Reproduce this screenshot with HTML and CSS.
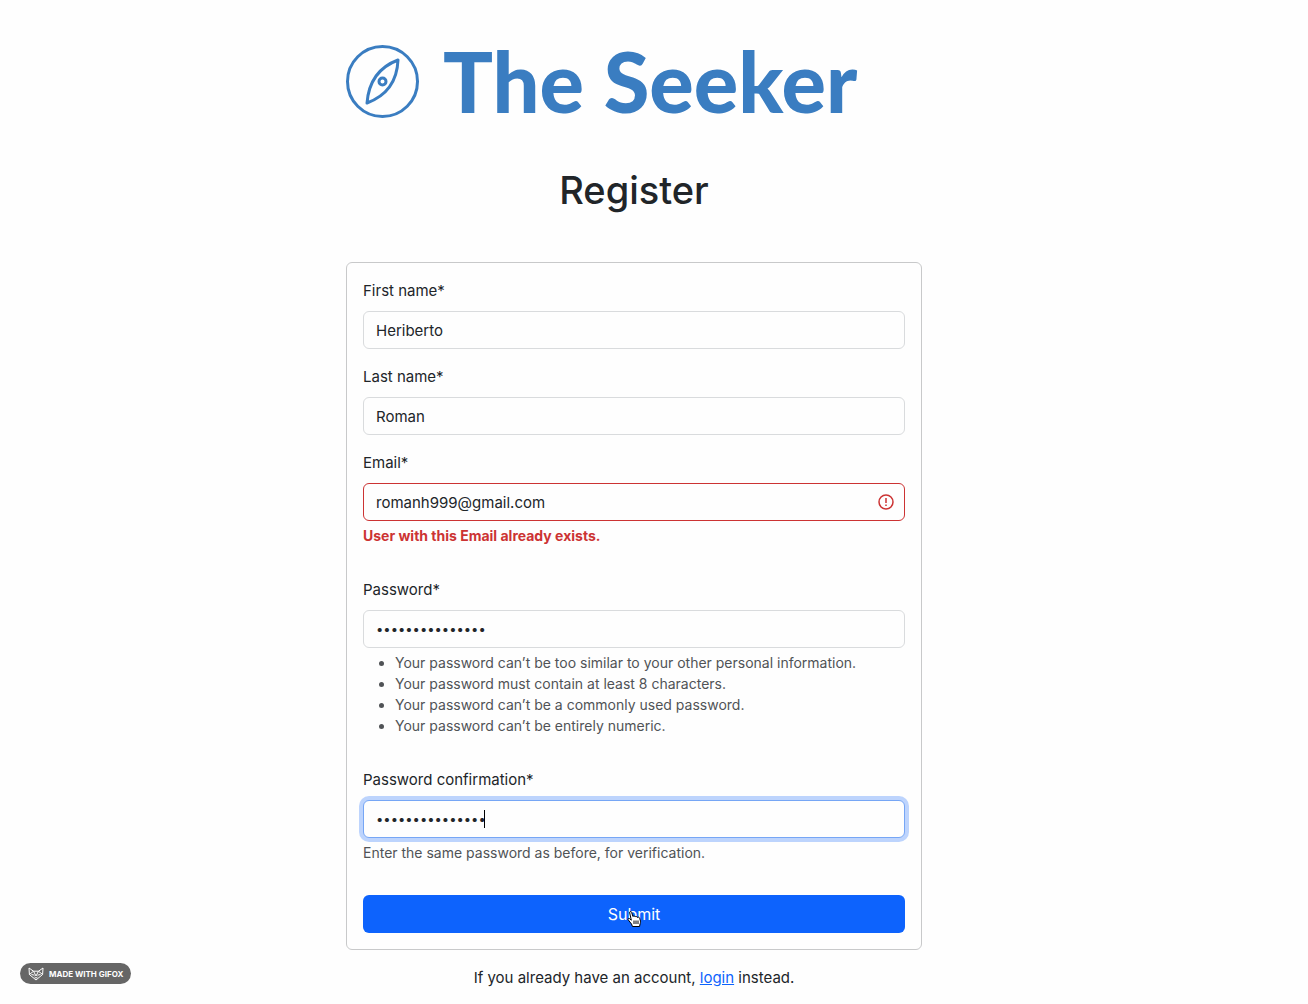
FILE: index.html
```html
<!DOCTYPE html>
<html lang="en">
<head>
<meta charset="utf-8">
<meta name="viewport" content="width=device-width, initial-scale=1">
<title>Register - The Seeker</title>
<link rel="stylesheet" href="styles.css">
</head>
<body>
<main class="page">
  <div class="brand">
    <svg class="brand-mark" viewBox="0 0 73 73" aria-hidden="true">
      <circle cx="36.500" cy="36.500" r="35"/>
      <path d="M52 15C36 21 23 33 21 58C37 52 51 40 52 15Z"/>
      <circle cx="36.500" cy="36.500" r="3.500"/>
    </svg>
    <span class="brand-name">The Seeker</span>
  </div>

  <h1 class="title">Register</h1>

  <form class="card">
    <div class="field">
      <label for="first-name">First name*</label>
      <input class="control" id="first-name" type="text" value="Heriberto">
    </div>
    <div class="field">
      <label for="last-name">Last name*</label>
      <input class="control" id="last-name" type="text" value="Roman">
    </div>
    <div class="field field-with-note">
      <label for="email">Email*</label>
      <div class="control-wrap">
        <input class="control invalid" id="email" type="email" value="romanh999@gmail.com" aria-describedby="email-error">
        <svg class="error-icon" viewBox="0 0 32 32" aria-hidden="true">
          <circle cx="16" cy="16" r="14"/>
          <path d="M16 8v10M16 21v3"/>
        </svg>
      </div>
      <p class="error" id="email-error">User with this Email already exists.</p>
    </div>
    <div class="field field-with-note">
      <label for="password">Password*</label>
      <input class="control" id="password" type="password" value="seekerpassword1" aria-describedby="password-help">
      <ul class="note" id="password-help">
        <li>Your password can’t be too similar to your other personal information.</li>
        <li>Your password must contain at least 8 characters.</li>
        <li>Your password can’t be a commonly used password.</li>
        <li>Your password can’t be entirely numeric.</li>
      </ul>
    </div>
    <div class="field field-with-note">
      <label for="password-confirm">Password confirmation*</label>
      <div class="control-wrap">
        <input class="control focused" id="password-confirm" type="password" value="seekerpassword1" aria-describedby="confirm-help">
        <span class="caret"></span>
      </div>
      <p class="note" id="confirm-help">Enter the same password as before, for verification.</p>
    </div>
    <button class="submit" type="submit">Submit
      <svg class="pointer" viewBox="0 0 16 18" aria-hidden="true">
        <path d="M5.500 16.500L4.500 14L1.200 9.800C.5 8.700 1.800 7.800 2.700 8.700L4.300 10.200L2.700 3C2.300 1.300 4.100.8 4.600 2.300L5.900 6.500C6.500 5.700 7.700 5.800 8.100 6.800C8.800 6.200 9.900 6.400 10.300 7.400C11.200 6.800 12.400 7.200 12.700 8.300L13.500 11.200C13.800 13 12.700 14.300 12.600 16.500Z"/>
        <path d="M7 10.500v3.500M9 10.500v3.500M11 10.500v3.500"/>
      </svg>
    </button>
  </form>

  <p class="alternate">If you already have an account, <a href="#login">login</a> instead.</p>
</main>

<div class="badge">
  <svg class="fox" viewBox="0 0 16 14" aria-hidden="true">
    <path d="M1 1L5.500 4.200H10.500L15 1L14.600 7.500L8 13L1.400 7.500Z"/>
    <path d="M1.400 7.500L5.500 4.200L8 9L10.500 4.200L14.600 7.500M3.500 7.500L6.500 8.200M12.500 7.500L9.500 8.200M6.500 10L8 11.200L9.500 10"/>
  </svg>
  <span>MADE WITH GIFOX</span>
</div>
</body>
</html>
```

FILE: styles.css
```css
* {
  box-sizing: border-box;
}

body {
  margin: 0;
  background: #fefefe;
  color: #212529;
  font: 400 15px/24px Inter, "Liberation Sans", sans-serif;
}

.page {
  display: flex;
  flex-direction: column;
  align-items: center;
  padding: 45px 40px 14px 0;
}

.brand,
.card {
  width: 100%;
  max-width: 576px;
}

.brand {
  display: flex;
  align-items: center;
  gap: 24px;
  color: #3a7dc1;
}

.brand-mark {
  width: 73px;
  height: 73px;
  flex: none;
  fill: none;
  stroke: currentColor;
  stroke-width: 3;
  stroke-linejoin: round;
}

.brand-name {
  font: 900 83px/73px Lato, sans-serif;
  white-space: nowrap;
}

.title {
  margin: 48px 0;
  font-size: 38px;
  line-height: 48px;
  font-weight: 500;
}

.card {
  padding: 16px;
  border: 1px solid #c8c9ca;
  border-radius: 6px;
}

.field {
  display: flex;
  flex-direction: column;
  margin-bottom: 16px;
}

.field-with-note {
  margin-bottom: 32px;
}

.field label {
  margin-bottom: 8px;
}

.control {
  display: block;
  width: 100%;
  height: 38px;
  padding: 6px 12px;
  border: 1px solid #d9dbdd;
  border-radius: 6px;
  background: #fefefe;
  color: inherit;
  font: inherit;
}

.control[type="password"] {
  font-size: 13px;
}

.control-wrap {
  position: relative;
}

.invalid {
  padding-right: 40px;
  border-color: #cc3333;
}

.focused {
  border-color: #76a6f5;
  box-shadow: 0 0 0 4px #bdd4fd;
}

.error-icon {
  position: absolute;
  top: 11px;
  right: 11px;
  width: 16px;
  height: 16px;
  fill: none;
  stroke: #cc3333;
  stroke-width: 3;
}

.caret {
  position: absolute;
  top: 10px;
  left: 121px;
  width: 1px;
  height: 18px;
  background: #000;
}

.note,
.error {
  margin: 4px 0 0;
  font-size: 14px;
  line-height: 21px;
}

.note {
  color: #505356;
}

ul.note {
  padding-left: 32px;
}

.error {
  color: #cc3333;
  font-weight: 700;
}

.submit {
  position: relative;
  display: block;
  width: 100%;
  height: 38px;
  padding: 6px 12px;
  border: 0;
  border-radius: 6px;
  background: #0d63fd;
  color: #fff;
  font: inherit;
  font-size: 16px;
}

.pointer {
  position: absolute;
  top: 15px;
  left: 50%;
  width: 16px;
  height: 18px;
  margin-left: -7px;
  fill: #fff;
  stroke: #000;
  stroke-width: 1;
}

.alternate {
  margin: 16px 0 0;
}

.alternate a {
  color: #0d63fd;
}

.badge {
  position: fixed;
  left: 20px;
  bottom: 20px;
  display: flex;
  align-items: center;
  gap: 5px;
  height: 21px;
  padding: 0 8px;
  border-radius: 11px;
  background: #666;
  color: #fff;
  font-size: 8px;
  line-height: 12px;
  font-weight: 700;
  white-space: nowrap;
}

.fox {
  width: 16px;
  height: 14px;
  fill: none;
  stroke: #fff;
  stroke-width: 1;
}
```
